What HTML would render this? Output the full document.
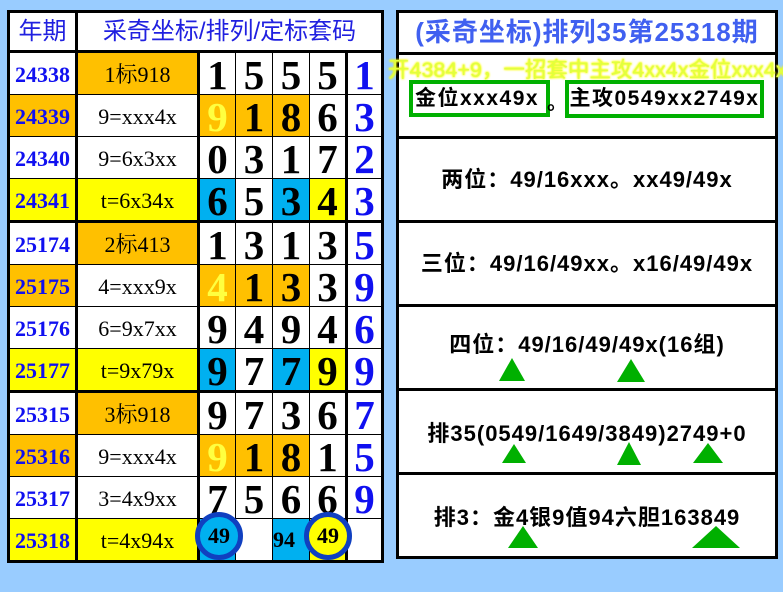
<!DOCTYPE html>
<html><head><meta charset="utf-8"><style>
body{margin:0;width:783px;height:592px;background:#99ccff;position:relative;overflow:hidden;font-family:"Liberation Serif","Noto Serif CJK SC",serif}
table{position:absolute;left:7px;top:10px;border-collapse:collapse;background:#fff;border:3px solid #000;table-layout:fixed}
td{border:1px solid #000;padding:0;text-align:center;font-weight:bold;overflow:hidden}
td>div{height:41px;line-height:43px;overflow:hidden}
tr.h td{font-family:"Liberation Sans","Noto Sans CJK SC",sans-serif;font-weight:normal;color:#2020e0;font-size:24px;border-bottom:3px solid #000}
tr.h td>div{height:37px;line-height:38px}
td.q{color:#1010f0;font-size:22px;border-right:3px solid #000}
td.t{font-weight:normal;font-size:22px;color:#000;border-right:3px solid #000}
td.d{font-size:41px;color:#000}
td.l{font-size:41px;color:#1010f0;border-left:3px solid #000}
td.d>div,td.l>div{line-height:44px}
tr.g td{border-bottom:3px solid #000}
.o{background:#ffc000}.y{background:#ffff00}.b{background:#00b0f0}
.yt{color:#ffff40!important}
.rp{position:absolute;left:396px;top:10px;width:376px;height:543px;border:3px solid #000;background:#fff}
.rb{position:absolute;left:0;width:376px;border-top:3px solid #000;font-family:"Liberation Sans","Noto Sans CJK SC",sans-serif;font-weight:bold;font-size:22px;letter-spacing:1px;text-align:center;color:#000;white-space:nowrap}
.tri{position:absolute;width:0;height:0;border-left:13px solid transparent;border-right:13px solid transparent;border-bottom:23px solid #00b000}
.circ{position:absolute;width:38px;height:38px;border:5px solid #1040c0;border-radius:50%;font-size:22px;font-weight:bold;text-align:center;line-height:38px}
</style></head><body>
<table>
<colgroup><col style="width:68px"><col style="width:122px"><col style="width:37px"><col style="width:37px"><col style="width:37px"><col style="width:37px"><col style="width:36px"></colgroup>
<tr class="h"><td style="border-right:3px solid #000"><div>年期</div></td><td colspan="6"><div>采奇坐标/排列/定标套码</div></td></tr>
<tr><td class="q"><div>24338</div></td><td class="t o"><div>1标918</div></td><td class="d"><div>1</div></td><td class="d"><div>5</div></td><td class="d"><div>5</div></td><td class="d"><div>5</div></td><td class="l"><div>1</div></td></tr>
<tr><td class="q o"><div>24339</div></td><td class="t"><div>9=xxx4x</div></td><td class="d o yt"><div>9</div></td><td class="d o"><div>1</div></td><td class="d o"><div>8</div></td><td class="d"><div>6</div></td><td class="l"><div>3</div></td></tr>
<tr><td class="q"><div>24340</div></td><td class="t"><div>9=6x3xx</div></td><td class="d"><div>0</div></td><td class="d"><div>3</div></td><td class="d"><div>1</div></td><td class="d"><div>7</div></td><td class="l"><div>2</div></td></tr>
<tr class="g"><td class="q y"><div>24341</div></td><td class="t y"><div>t=6x34x</div></td><td class="d b"><div>6</div></td><td class="d"><div>5</div></td><td class="d b"><div>3</div></td><td class="d y"><div>4</div></td><td class="l"><div>3</div></td></tr>
<tr><td class="q"><div>25174</div></td><td class="t o"><div>2标413</div></td><td class="d"><div>1</div></td><td class="d"><div>3</div></td><td class="d"><div>1</div></td><td class="d"><div>3</div></td><td class="l"><div>5</div></td></tr>
<tr><td class="q o"><div>25175</div></td><td class="t"><div>4=xxx9x</div></td><td class="d o yt"><div>4</div></td><td class="d o"><div>1</div></td><td class="d o"><div>3</div></td><td class="d"><div>3</div></td><td class="l"><div>9</div></td></tr>
<tr><td class="q"><div>25176</div></td><td class="t"><div>6=9x7xx</div></td><td class="d"><div>9</div></td><td class="d"><div>4</div></td><td class="d"><div>9</div></td><td class="d"><div>4</div></td><td class="l"><div>6</div></td></tr>
<tr class="g"><td class="q y"><div>25177</div></td><td class="t y"><div>t=9x79x</div></td><td class="d b"><div>9</div></td><td class="d"><div>7</div></td><td class="d b"><div>7</div></td><td class="d y"><div>9</div></td><td class="l"><div>9</div></td></tr>
<tr><td class="q"><div>25315</div></td><td class="t o"><div>3标918</div></td><td class="d"><div>9</div></td><td class="d"><div>7</div></td><td class="d"><div>3</div></td><td class="d"><div>6</div></td><td class="l"><div>7</div></td></tr>
<tr><td class="q o"><div>25316</div></td><td class="t"><div>9=xxx4x</div></td><td class="d o yt"><div>9</div></td><td class="d o"><div>1</div></td><td class="d o"><div>8</div></td><td class="d"><div>1</div></td><td class="l"><div>5</div></td></tr>
<tr><td class="q"><div>25317</div></td><td class="t"><div>3=4x9xx</div></td><td class="d"><div>7</div></td><td class="d"><div>5</div></td><td class="d"><div>6</div></td><td class="d"><div>6</div></td><td class="l"><div>9</div></td></tr>
<tr><td class="q y"><div>25318</div></td><td class="t y"><div>t=4x94x</div></td><td class="d b"><div></div></td><td class="d"><div></div></td><td class="d b" style="font-size:22px;text-align:left"><div style="line-height:41px">94</div></td><td class="d y"><div></div></td><td class="l"><div></div></td></tr>
</table>
<div class="circ" style="left:195px;top:512px;background:#00b0f0">49</div>
<div class="circ" style="left:304px;top:512px;background:#ffff00">49</div>

<div class="rp">
<div style="position:absolute;left:0;top:0;width:376px;height:39px;line-height:39px;text-align:center;font-family:'Liberation Sans','Noto Sans CJK SC',sans-serif;font-weight:bold;font-size:26px;letter-spacing:1px;color:#4060f0;white-space:nowrap">(采奇坐标)排列35第25318期</div>
<div class="rb" style="top:39px;height:81px"></div>
<div class="rb" style="top:123px;height:81px;line-height:81px">两位：49/16xxx。xx49/49x</div>
<div class="rb" style="top:207px;height:81px;line-height:81px">三位：49/16/49xx。x16/49/49x</div>
<div class="rb" style="top:291px;height:81px;line-height:76px">四位：49/16/49/49x(16组)</div>
<div class="rb" style="top:375px;height:81px;line-height:86px">排35(0549/1649/3849)2749+0</div>
<div class="rb" style="top:459px;height:81px;line-height:86px">排3：金4银9值94六胆163849</div>
</div>
<div style="position:absolute;left:388px;top:53px;width:400px;font-family:'Liberation Sans','Noto Sans CJK SC',sans-serif;font-size:21.5px;color:#e0ff40;text-shadow:0 0 2px #ffff00,0 0 2px #ffff00;white-space:nowrap">开4384+9，一招套中主攻4xx4x金位xxx4x</div>
<div style="position:absolute;left:409px;top:80px;width:131px;height:29px;border:4px solid #00b000;background:#fff;font-family:'Liberation Sans','Noto Sans CJK SC',sans-serif;font-weight:bold;font-size:21px;letter-spacing:1.5px;line-height:29px;padding-left:2px;white-space:nowrap;overflow:hidden">金位xxx49x</div>
<div style="position:absolute;left:547px;top:86px;font-weight:bold;font-size:20px;font-family:'Liberation Sans','Noto Sans CJK SC',sans-serif">。</div>
<div style="position:absolute;left:565px;top:80px;width:191px;height:30px;border:4px solid #00b000;background:#fff;font-family:'Liberation Sans','Noto Sans CJK SC',sans-serif;font-weight:bold;font-size:21px;letter-spacing:1.5px;line-height:30px;text-align:center;white-space:nowrap;overflow:hidden">主攻0549xx2749x</div>

<div class="tri" style="left:499px;top:358px"></div>
<div class="tri" style="left:617px;top:359px;border-left-width:14px;border-right-width:14px"></div>
<div class="tri" style="left:502px;top:444px;border-left-width:12px;border-right-width:12px;border-bottom-width:19px"></div>
<div class="tri" style="left:617px;top:442px;border-left-width:12px;border-right-width:12px"></div>
<div class="tri" style="left:693px;top:443px;border-left-width:15px;border-right-width:15px;border-bottom-width:20px"></div>
<div class="tri" style="left:508px;top:526px;border-left-width:15px;border-right-width:15px;border-bottom-width:22px"></div>
<div class="tri" style="left:692px;top:526px;border-left-width:24px;border-right-width:24px;border-bottom-width:22px"></div>
</body></html>
